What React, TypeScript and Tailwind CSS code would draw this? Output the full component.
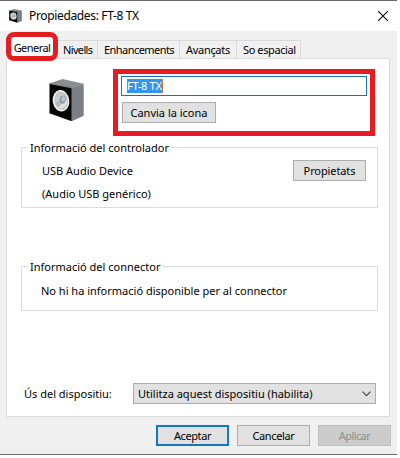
import { ReactNode } from "react";
import clsx from "clsx";

const tabs = [
  { label: "Nivells", className: "w-10 pl-[5px] tracking-[-0.65px]" },
  { label: "Enhancements", className: "w-[82px] pl-1.5 tracking-[-0.55px]" },
  { label: "Avançats", className: "w-[57px] pl-1.5 tracking-[-0.3px]" },
  { label: "So espacial", className: "w-[64px] pl-1.5 tracking-[-0.4px]" },
];

function SpeakerIcon({ className }: { className?: string }) {
  return (
    <svg viewBox="0 0 35 43" preserveAspectRatio="none" className={className} aria-hidden="true">
      <path d="M.3 4.5 13.5 0l21.2 4.7-12 4.3z" fill="#8b8d91" />
      <path d="m22.7 8.7 12-4v32l-12 5.5z" fill="#7c7f86" />
      <path d="m.3 4.5 22.4 4.2v33.5L.3 34.3z" fill="#060606" />
      <path d="m.5 34.2V4.6l22.2 4.3" fill="none" stroke="#8d8f93" strokeWidth="0.7" />
      <ellipse cx="12" cy="21.8" rx="8.3" ry="10.8" fill="#efefef" transform="rotate(-8 12 21.8)" />
      <ellipse cx="12.2" cy="21.6" rx="6.6" ry="9" fill="#b4babd" transform="rotate(-8 12.2 21.6)" />
      <path d="M6 20c1-5 5-8 9-5l-2 4-6 5z" fill="#c9ced0" />
      <path d="M9 29c6 2 9-2 9.500-9l-5 4z" fill="#dfe3e4" />
      <ellipse cx="13.6" cy="20.8" rx="3" ry="4" fill="#8f9ca2" />
      <ellipse cx="14.3" cy="19.7" rx="1.9" ry="2.500" fill="#bdc6ca" />
    </svg>
  );
}

function Button({ children, className }: { children: ReactNode; className?: string }) {
  return (
    <button className={clsx("flex h-[21px] shrink-0 items-center justify-center border whitespace-nowrap", className)}>
      {children}
    </button>
  );
}

type GroupProps = {
  title: string;
  className: string;
  children: ReactNode;
};

function Group({ title, className, children }: GroupProps) {
  return (
    <fieldset className={clsx("ml-[14px] w-[357px] border border-[#dcdcdc]", className)}>
      <legend className="ml-[6px] h-4 px-0.5 pt-px leading-4 whitespace-nowrap">{title}</legend>
      {children}
    </fieldset>
  );
}

export default function App() {
  return (
    <div className="h-[458px] w-[400px] overflow-hidden bg-white font-['Noto_Sans',sans-serif] text-[11px] leading-4 text-black">
      <div className="flex h-[455px] w-[397px] flex-col border-t border-b border-[#6c6a6c] bg-[#f0f0f0]">
        <header className="flex h-[30px] shrink-0 items-center bg-white pl-[9px]">
          <SpeakerIcon className="h-[14px] w-[13px]" />
          <h1 className="ml-[7px] text-[12px] whitespace-nowrap tracking-[-0.35px]">Propiedades: FT-8 TX</h1>
          <svg viewBox="0 0 10 10" className="mr-[9px] ml-auto size-[10px]" fill="none" stroke="#111" strokeWidth="1.1">
            <path d="m0 0 10 10M10 0 0 10" />
          </svg>
        </header>

        <nav className="relative z-10 flex h-[27px] shrink-0 items-end pl-[6px]">
          <button className="-mb-[3px] h-[29px] w-[52px] shrink-0 rounded-[8px] border-[5px] border-[#e51c24] bg-white pt-[3px] leading-4 tracking-[-0.55px]">
            General
          </button>
          {tabs.map((tab) => (
            <button
              key={tab.label}
              className={clsx("h-[18px] shrink-0 border-t border-r border-[#d9d9d9] pt-px text-left leading-4 whitespace-nowrap", tab.className)}
            >
              {tab.label}
            </button>
          ))}
        </nav>

        <main className="ml-[6px] h-[359px] w-[384px] shrink-0 border border-[#dcdcdc] bg-white">
          <div className="flex pt-[10px]">
            <SpeakerIcon className="mt-[10px] ml-[42px] h-[43px] w-[35px]" />
            <div className="ml-[29px] h-[67px] w-[262px] border-[5px] border-[#e51c24] pt-[2px] pl-[3px]">
              <div className="flex h-5 w-[246px] items-center border border-[#1b73b5] pl-[5px]">
                <span className="h-[14px] border-r border-[#d97924] bg-[#3595f5] leading-[14px] tracking-[-0.3px] text-white">
                  FT-8 TX
                </span>
              </div>
              <Button className="mt-[6px] ml-px w-[94px] border-[#adadad] bg-[#e1e1e1]">Canvia la icona</Button>
            </div>
          </div>

          <Group title="Informació del controlador" className="mt-[3px] h-[69px]">
            <div className="flex justify-between pr-[11px] pl-5">
              <div>
                <p className="mt-2">USB Audio Device</p>
                <p className="mt-[7px]">(Audio USB genérico)</p>
              </div>
              <Button className="mt-[5px] w-[73px] border-[#adadad] bg-[#e1e1e1] tracking-[-0.1px]">Propietats</Button>
            </div>
          </Group>

          <Group title="Informació del connector" className="mt-[50px] h-[53px]">
            <p className="mt-[9px] pl-[19px] whitespace-nowrap">No hi ha informació disponible per al connector</p>
          </Group>

          <div className="mt-[72px] flex h-[21px] items-center pl-[17px]">
            <label className="w-[109px] pt-px whitespace-nowrap">Ús del dispositiu:</label>
            <button className="flex h-[21px] w-[243px] items-center border border-[#adadad] bg-[#e1e1e1] pr-1 pl-1">
              <span className="pt-px whitespace-nowrap">Utilitza aquest dispositiu (habilita)</span>
              <svg viewBox="0 0 9 6" className="ml-auto h-[6px] w-[9px]" fill="none" stroke="#444" strokeWidth="1.1">
                <path d="m.5.7 4 4 4-4" />
              </svg>
            </button>
          </div>
        </main>

        <footer className="mt-[8px] flex gap-2 pl-[156px]">
          <Button className="w-[73px] border-2 border-[#1177c7] bg-[#e1e1e1] tracking-[-0.4px]">Aceptar</Button>
          <Button className="w-[73px] border-[#adadad] bg-[#e1e1e1] tracking-[-0.35px]">Cancelar</Button>
          <Button className="w-[73px] border-[#bfbfbf] bg-[#cccccc] tracking-[-0.6px] text-[#909090]">Aplicar</Button>
        </footer>
      </div>
    </div>
  );
}
